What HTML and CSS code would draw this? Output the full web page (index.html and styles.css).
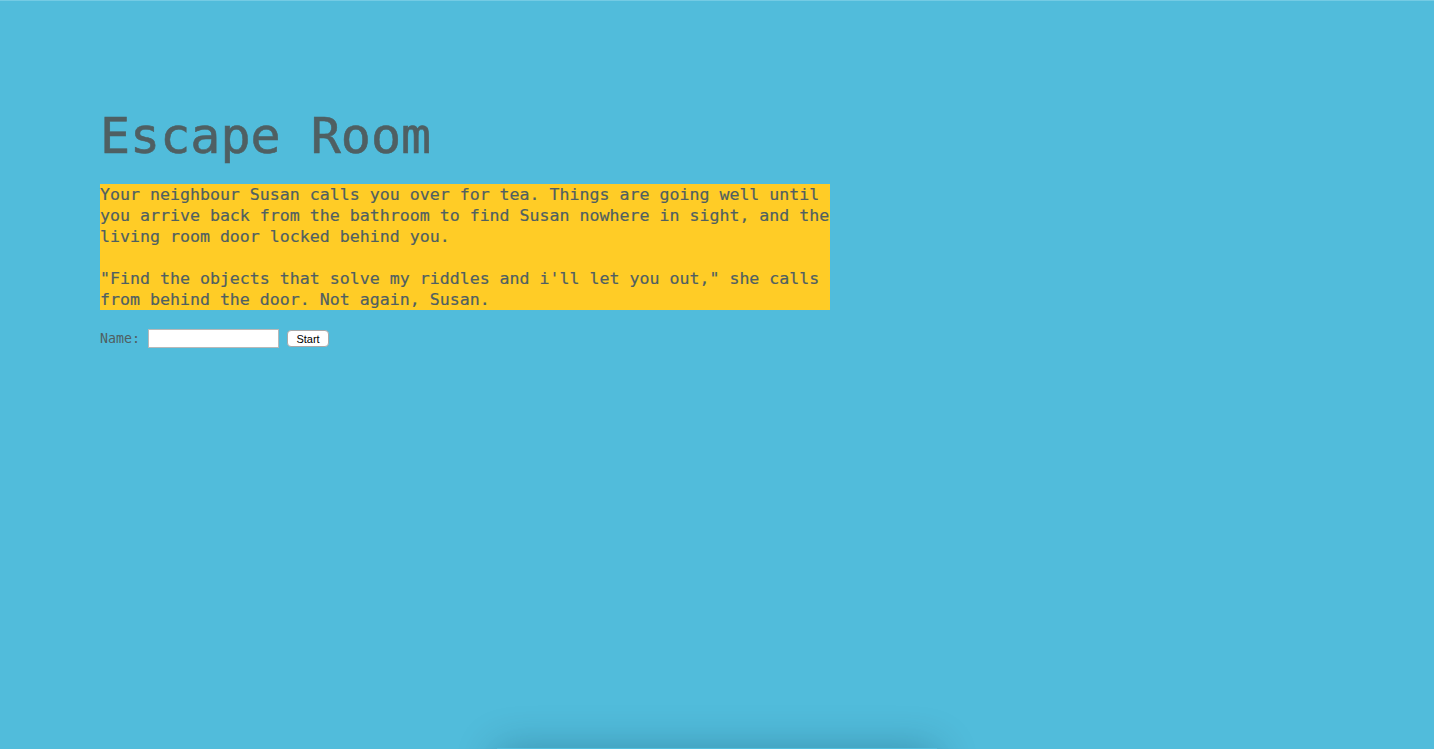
FILE: index.html
```html
<!DOCTYPE html>
<html lang="en">
<head>
<meta charset="utf-8">
<title>Escape Room</title>
<link rel="stylesheet" href="styles.css">
</head>
<body>
<div class="page">
  <main class="intro">
    <h1 class="title">Escape Room</h1>
    <div class="story">
      <p class="story-line">Your neighbour Susan calls you over for tea. Things are going well until you arrive back from the bathroom to find Susan nowhere in sight, and the living room door locked behind you.</p>
      <p class="story-line story-gap">"Find the objects that solve my riddles and i'll let you out," she calls from behind the door. Not again, Susan.</p>
    </div>
    <form class="start-form">
      <label class="name-label" for="name">Name:</label>
      <input class="name-input" id="name" type="text">
      <button class="start-btn" type="button">Start</button>
    </form>
  </main>
</div>
<div class="game-box"></div>
</body>
</html>
```
FILE: styles.css
```css
html, body {
  margin: 0;
  padding: 0;
}
body {
  background: #51bcdb;
  border-top: 1px solid #74cbe4;
  font-family: "DejaVu Sans Mono", monospace;
  color: #4f5f62;
  overflow: hidden;
}
.page {
  min-height: 747px;
}
.intro {
  padding: 105px 0 0 100px;
}
.title {
  margin: 0;
  font-size: 50px;
  line-height: 60px;
  font-weight: normal;
  color: #4f5f62;
  -webkit-text-stroke: 0.6px #4f5f62;
}
.story {
  margin-top: 18px;
  width: 730px;
  background: #ffcc26;
}
.story-line {
  margin: 0;
  font-size: 16.6px;
  line-height: 21px;
  -webkit-text-stroke: 0.2px #4f5f62;
}
.story-gap {
  margin-top: 21px;
}
.start-form {
  margin-top: 19px;
  display: flex;
  align-items: center;
}
.name-label {
  font-size: 13.3px;
  color: #4f5f62;
  margin-right: 8px;
}
.name-input {
  box-sizing: border-box;
  width: 131px;
  height: 19px;
  border: 1px solid #b8b8b8;
  background: #fff;
  margin: 0 8px 0 0;
  padding: 1px 2px;
}
.start-btn {
  box-sizing: border-box;
  height: 17px;
  width: 42px;
  padding: 0;
  background: #fff;
  border: 1px solid #a9a9a9;
  border-radius: 4px;
  font-family: "Liberation Sans", Arial, sans-serif;
  font-size: 11px;
  color: #000;
}
.game-box {
  width: 440px;
  height: 120px;
  margin: 0 auto;
  background: #51bcdb;
  box-shadow: 0 0 40px rgba(0, 40, 60, 0.28);
}
```
